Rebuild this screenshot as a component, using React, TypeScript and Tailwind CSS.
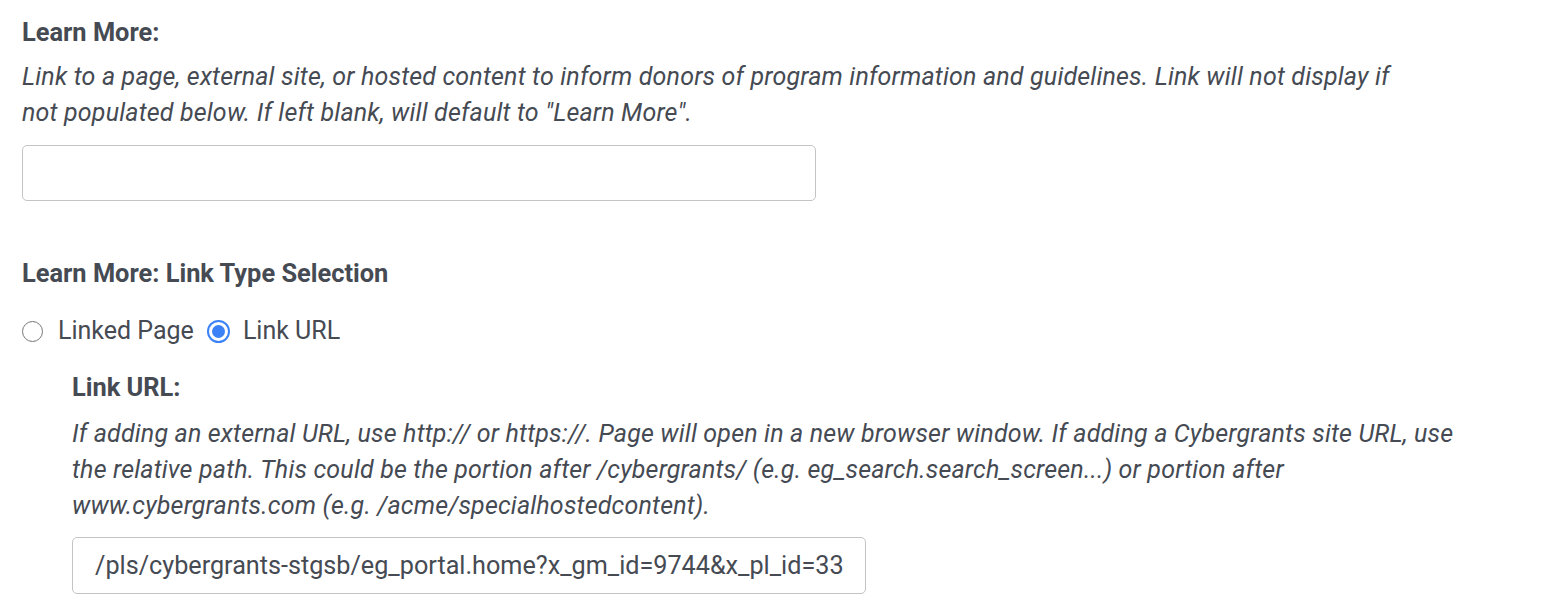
import React from "react";

function App() {
  return (
    <div
      className="min-h-screen bg-white pl-[22px] pt-[17px] text-[#454a53]"
      style={{ fontFamily: "Roboto, 'Liberation Sans', sans-serif" }}
    >
      {/* Learn More */}
      <div>
        <label htmlFor="learnMore" className="block text-[25.4px] leading-[30px] font-bold">
          Learn More:
        </label>
        <p className="mt-3 max-w-[1390px] text-[25px] leading-[36px] tracking-[0.18px] italic">
          Link to a page, external site, or hosted content to inform donors of program information and
          guidelines. Link will not display if not populated below. If left blank, will default to "Learn
          More".
        </p>
        <input
          type="text"
          id="learnMore"
          className="mt-[14px] block h-[56px] w-[794px] rounded-[5px] border border-[#c4c4c4] bg-white px-[22px] text-[25px] outline-none"
        />
      </div>

      {/* Link type */}
      <div className="mt-[57px]">
        <div className="text-[25.4px] leading-[30px] font-bold">Learn More: Link Type Selection</div>
        <div className="mt-[25px] flex h-[36px] items-center text-[25px]">
          <label className="flex items-center">
            <span className="mr-[15px] box-border h-[21px] w-[21px] rounded-full border-[1.5px] border-[#767676] bg-white" />
            Linked Page
          </label>
          <label className="ml-[13px] flex items-center">
            <span className="mr-[13px] flex h-[23px] w-[23px] items-center justify-center rounded-full border-[2px] border-[#3b82f6] bg-white">
              <span className="h-[13px] w-[13px] rounded-full bg-[#3b82f6]" />
            </span>
            Link URL
          </label>
        </div>
      </div>

      {/* Link URL */}
      <div className="mt-[23px] pl-[50px]">
        <label htmlFor="linkUrl" className="block text-[25.4px] leading-[30px] font-bold">
          Link URL:
        </label>
        <p className="mt-[14px] max-w-[1390px] text-[25px] leading-[36px] tracking-[0.18px] italic">
          If adding an external URL, use http:// or https://. Page will open in a new browser window. If
          adding a Cybergrants site URL, use the relative path. This could be the portion after
          /cybergrants/ (e.g. eg_search.search_screen...) or portion after www.cybergrants.com (e.g.
          /acme/specialhostedcontent).
        </p>
        <input
          type="text"
          id="linkUrl"
          defaultValue="/pls/cybergrants-stgsb/eg_portal.home?x_gm_id=9744&x_pl_id=33"
          className="mt-[13px] block h-[57px] w-[794px] rounded-[5px] border border-[#c4c4c4] bg-white px-[22px] text-[25.2px] text-[#454a53] outline-none"
        />
      </div>
    </div>
  );
}

export default App;
